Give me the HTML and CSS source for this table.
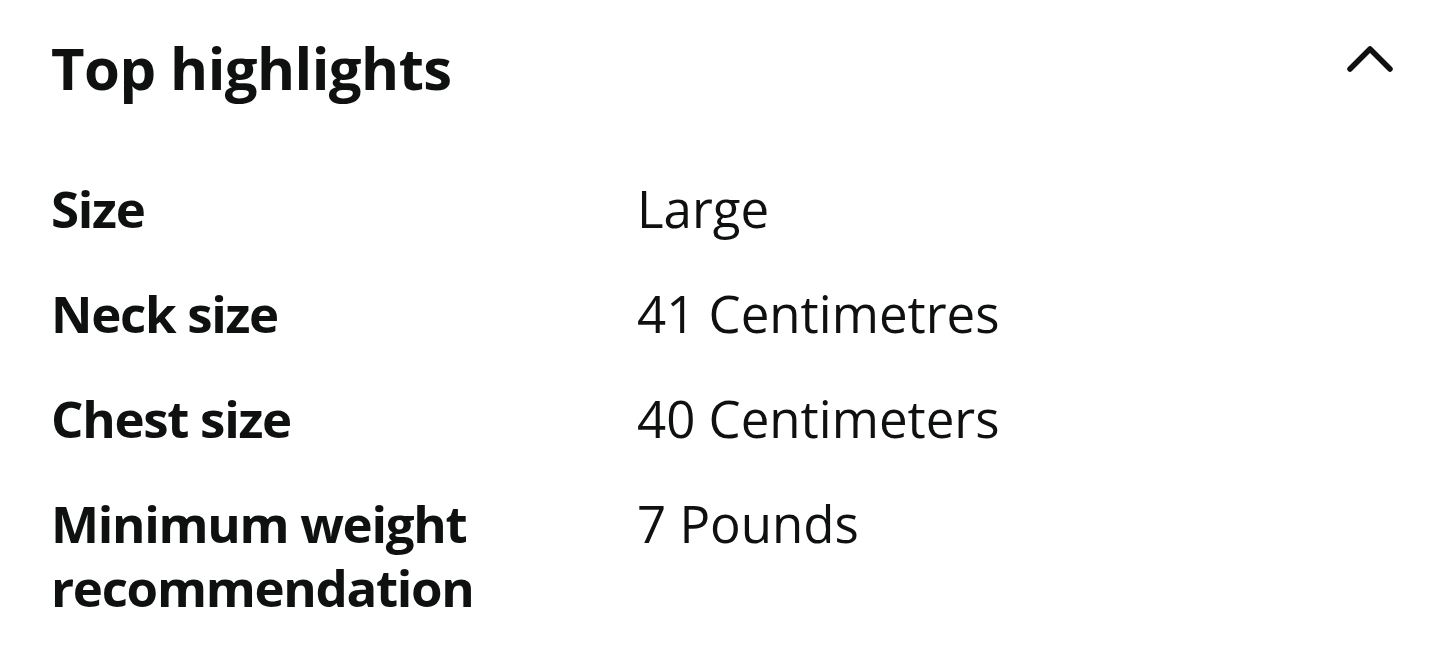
FILE: index.html
```html
<!DOCTYPE html>
<html lang="en">
<head>
<meta charset="utf-8">
<title>Top highlights</title>
<link rel="stylesheet" href="styles.css">
</head>
<body>
<section class="panel">
  <header class="panel-head">
    <h2 class="panel-title">Top highlights</h2>
    <button class="toggle" aria-label="Collapse">
      <svg width="56" height="40" viewBox="0 0 56 40" aria-hidden="true">
        <path d="M8 30 L28 10 L48 30" fill="none" stroke="#0f1111" stroke-width="5.5" stroke-linecap="round" stroke-linejoin="round"/>
      </svg>
    </button>
  </header>
  <dl class="specs">
    <div class="spec-row">
      <dt class="spec-label">Size</dt>
      <dd class="spec-value">Large</dd>
    </div>
    <div class="spec-row">
      <dt class="spec-label">Neck size</dt>
      <dd class="spec-value">41 Centimetres</dd>
    </div>
    <div class="spec-row">
      <dt class="spec-label">Chest size</dt>
      <dd class="spec-value">40 Centimeters</dd>
    </div>
    <div class="spec-row">
      <dt class="spec-label">Minimum weight recommendation</dt>
      <dd class="spec-value">7 Pounds</dd>
    </div>
  </dl>
</section>
</body>
</html>
```

FILE: styles.css
```css
html, body {
  margin: 0;
  padding: 0;
  background: #ffffff;
}

body {
  font-family: "Open Sans", "Noto Sans", "Liberation Sans", sans-serif;
  color: #0f1111;
}

.panel {
  padding: 28px 42px 0 51px;
}

.panel-head {
  display: flex;
  align-items: center;
  justify-content: space-between;
  height: 80px;
}

.panel-title {
  margin: 0;
  font-size: 58px;
  line-height: 80px;
  font-weight: 700;
  letter-spacing: -0.55px;
}

.toggle {
  border: 0;
  background: none;
  padding: 0;
  margin: 0 0 18px 0;
  display: flex;
}

.specs {
  margin: 68px 0 0 0;
  display: flex;
  flex-direction: column;
  gap: 41px;
}

.spec-row {
  display: grid;
  grid-template-columns: 586px 1fr;
}

.spec-label,
.spec-value {
  margin: 0;
  font-size: 51px;
  line-height: 64px;
}

.spec-label {
  font-weight: 700;
  letter-spacing: -1.3px;
  max-width: 440px;
}

.spec-value {
  font-weight: 400;
}
```
